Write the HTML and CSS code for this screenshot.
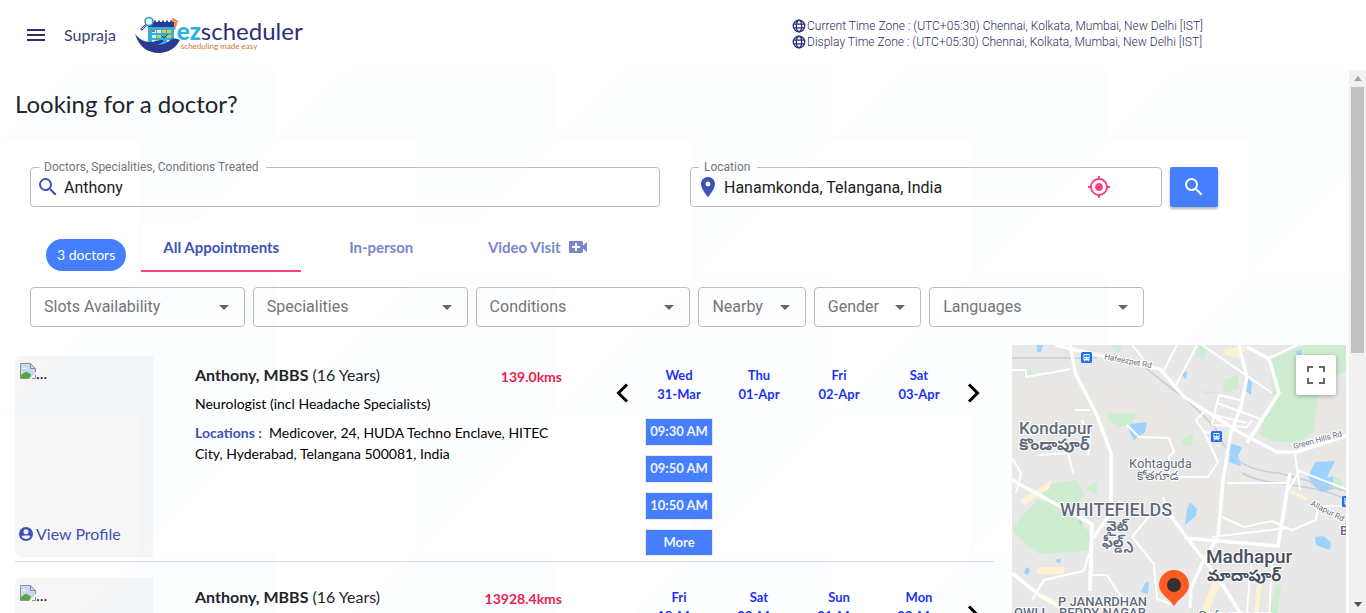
FILE: index.html
```html
<!DOCTYPE html>
<html lang="en">
<head>
<meta charset="utf-8">
<meta name="viewport" content="width=device-width, initial-scale=1">
<title>ezscheduler</title>
<link rel="stylesheet" href="styles.css">
</head>
<body>
<svg class="sprite" aria-hidden="true">
  <symbol id="i-search" viewBox="0 0 24 24"><path d="M15.5 14h-.79l-.28-.27A6.47 6.47 0 0 0 16 9.5 6.5 6.5 0 1 0 9.5 16c1.61 0 3.09-.59 4.23-1.57l.27.28v.79l5 4.99L20.49 19l-4.99-5zm-6 0C7.01 14 5 11.99 5 9.5S7.01 5 9.5 5 14 7.01 14 9.5 11.99 14 9.5 14z"/></symbol>
  <symbol id="i-globe" viewBox="0 0 16 16"><g fill="none" stroke="currentColor" stroke-width="1.5"><circle cx="8" cy="8" r="6.6"/><ellipse cx="8" cy="8" rx="3" ry="6.6"/><path d="M1.6 5.8h12.8M1.6 10.2h12.8"/></g></symbol>
  <symbol id="i-user" viewBox="0 0 16 16"><path fill-rule="evenodd" d="M8 1a7 7 0 1 0 0 14A7 7 0 0 0 8 1zm0 2.300a2.500 2.500 0 1 1 0 5 2.500 2.500 0 0 1 0-5zM3.600 10.200c1.300-.8 7.500-.8 8.800 0-.9 1.700-2.500 2.700-4.400 2.700s-3.500-1-4.400-2.700z"/></symbol>
  <symbol id="i-broken" viewBox="0 0 16 16"><path d="M.5.500h10l5 5v10H.5z" fill="#c5d8f7"/><path d="M1 15.500V12l5-3.500 5 3-1.500 4z" fill="#5aa637"/><path d="M2.500 6c0-2 2-2.500 2.500-1 1.500-.5 2.500 1 1 1z" fill="#fff"/><path d="M16 9.500 9 16h7z" fill="#f5f6f7"/><path d="M15.500 9V5.500l-5-5H.5v15H9M10.500.500v5h5M15.500 12v3.500H12" fill="none" stroke="#8e9296"/></symbol>
  <symbol id="i-train" viewBox="0 0 11 11"><rect width="11" height="11" rx="1.500" fill="#1a73e8"/><path fill="#fff" fill-rule="evenodd" d="M2.500 2h6v6h-1l1 1.500h-1L7 8.500H4L3.500 9.500h-1l1-1.500h-1zM3.300 3v2h2V3zM5.800 3v2h2V3zM3.500 6v1h1V6zm3 0v1h1V6z"/></symbol>
</svg>

<header class="topbar">
  <button class="menu" type="button" aria-label="Menu"><span></span><span></span><span></span></button>
  <a class="user" href="#">Supraja</a>
  <a class="logo" href="#" aria-label="ezscheduler">
    <svg class="logo-mark" viewBox="0 0 48 38" aria-hidden="true">
      <path d="M34 8l4-6 5 3-3 9-5-1z" fill="#f47b45"/><path d="M36 6l4 3M37 4l5 3M35 8l5 3" stroke="#fbc4a5" stroke-width=".8"/>
      <rect x="13" y="8" width="26" height="24" rx="2" fill="#2bb3e0"/>
      <path d="M13 6h26v5H13z" fill="#2b3990"/>
      <path d="M16 4.500v3M20 4.500v3M24 4.500v3M28 4.500v3M32 4.500v3M36 4.500v3" stroke="#2b3990" stroke-width="1.800"/>
      <path d="M17 14h4v3h-4zM22 14h4v3h-4zM17 19h4v3h-4zM22 24h4v3h-4zM17 24h4v2h-4zM32 24h4v2h-4z" fill="#d9f1fa"/>
      <path d="M27 14h4v3h-4zM22 19h4v3h-4zM32 14h4v3h-4zM32 19h4v3h-4z" fill="#fcc418"/><path d="M17 14h3v2h-3z" fill="#e9552d"/>
      <path d="M27 20l2 2 4-4" stroke="#2b3990" fill="none"/>
      <circle cx="14" cy="5.500" r="4" fill="#e8f7fd" stroke="#2f9fcc" stroke-width="1.600"/>
      <path d="M11 9l-5 5" stroke="#2b3990" stroke-width="2.400"/><path d="M10.500 9.500l-4 4" stroke="#fff" stroke-width=".8"/>
      <path d="M0 18c4 5 9 8 15 8 5 0 7-2 12-2 2 0 2 2-1 3l-4 2c7 0 11-3 15-6 3-1 6 0 8 1-4 8-12 13-21 13C13 37 4 31 0 18z" fill="#2b3990"/>
    </svg>
    <span class="logo-words"><span class="logo-name"><b>ez</b>scheduler</span><span class="logo-tag">scheduling made easy</span></span>
  </a>
  <div class="zones">
    <div class="zone"><svg><use href="#i-globe"/></svg>Current Time Zone : (UTC+05:30) Chennai, Kolkata, Mumbai, New Delhi [IST]</div>
    <div class="zone"><svg><use href="#i-globe"/></svg>Display Time Zone : (UTC+05:30) Chennai, Kolkata, Mumbai, New Delhi [IST]</div>
  </div>
</header>

<div class="viewport">
<main class="page">
  <h1>Looking for a doctor?</h1>
  <form class="search">
    <fieldset class="field field-query">
      <legend><label for="query">Doctors, Specialities, Conditions Treated</label></legend>
      <svg class="lead"><use href="#i-search"/></svg>
      <input id="query" type="text" value="Anthony">
    </fieldset>
    <fieldset class="field field-place">
      <legend><label for="place">Location</label></legend>
      <svg class="lead" viewBox="0 0 24 24"><path d="M12 2C8.130 2 5 5.130 5 9c0 5.250 7 13 7 13s7-7.750 7-13c0-3.870-3.130-7-7-7zm0 9.500a2.500 2.500 0 0 1 0-5 2.500 2.500 0 0 1 0 5z"/></svg>
      <input id="place" type="text" value="Hanamkonda, Telangana, India">
      <button class="locate" type="button" aria-label="Use my location"><svg viewBox="0 0 24 24"><path d="M12 8c-2.210 0-4 1.790-4 4s1.790 4 4 4 4-1.790 4-4-1.790-4-4-4zm8.940 3A8.994 8.994 0 0 0 13 3.060V1h-2v2.060A8.994 8.994 0 0 0 3.060 11H1v2h2.060A8.994 8.994 0 0 0 11 20.940V23h2v-2.060A8.994 8.994 0 0 0 20.940 13H23v-2h-2.060zM12 19c-3.870 0-7-3.130-7-7s3.130-7 7-7 7 3.130 7 7-3.130 7-7 7z"/></svg></button>
    </fieldset>
    <button class="go" type="submit" aria-label="Search"><svg><use href="#i-search"/></svg></button>
  </form>

  <div class="tabrow">
    <span class="count">3 doctors</span>
    <div class="tabs" role="tablist">
      <button type="button" role="tab" aria-selected="true" class="tab active">All Appointments</button>
      <button type="button" role="tab" aria-selected="false" class="tab">In-person</button>
      <button type="button" role="tab" aria-selected="false" class="tab video">Video Visit <svg viewBox="0 0 18 12"><path fill-rule="evenodd" d="M1 0h12a1 1 0 0 1 1 1v3.500L18 1v10l-4-3.500V11a1 1 0 0 1-1 1H1a1 1 0 0 1-1-1V1a1 1 0 0 1 1-1zm5 2v3H3v2h3v3h2V7h3V5H8V2z"/></svg></button>
    </div>
  </div>

  <div class="filters">
    <div class="pick"><select aria-label="Slots Availability"><option>Slots Availability</option></select></div>
    <div class="pick"><select aria-label="Specialities"><option>Specialities</option></select></div>
    <div class="pick"><select aria-label="Conditions"><option>Conditions</option></select></div>
    <div class="pick small"><select aria-label="Nearby"><option>Nearby</option></select></div>
    <div class="pick small"><select aria-label="Gender"><option>Gender</option></select></div>
    <div class="pick"><select aria-label="Languages"><option>Languages</option></select></div>
  </div>

  <div class="results">
    <div class="list">
      <article class="card">
        <div class="photo">
          <div class="missing"><svg><use href="#i-broken"/></svg>...</div>
          <a class="profile" href="#"><svg><use href="#i-user"/></svg>View Profile</a>
        </div>
        <div class="info">
          <div class="title"><h2><b>Anthony, MBBS</b> (16 Years)</h2><span class="km">139.0kms</span></div>
          <p class="spec">Neurologist (incl Headache Specialists)</p>
          <p class="loc"><b>Locations :</b>&nbsp; Medicover, 24, HUDA Techno Enclave, HITEC City, Hyderabad, Telangana 500081, India</p>
        </div>
        <div class="calendar">
          <button class="step" type="button" aria-label="Previous days"><svg viewBox="0 0 14 20"><path d="M12 1.500 3.500 10l8.500 8.500"/></svg></button>
          <div class="day"><div class="date">Wed<br>31-Mar</div>
            <button class="slot" type="button">09:30 AM</button><button class="slot" type="button">09:50 AM</button><button class="slot" type="button">10:50 AM</button><button class="slot" type="button">More</button></div>
          <div class="day"><div class="date">Thu<br>01-Apr</div></div>
          <div class="day"><div class="date">Fri<br>02-Apr</div></div>
          <div class="day"><div class="date">Sat<br>03-Apr</div></div>
          <button class="step" type="button" aria-label="Next days"><svg viewBox="0 0 14 20"><path d="M2 1.500 10.500 10 2 18.500"/></svg></button>
        </div>
      </article>
      <article class="card">
        <div class="photo">
          <div class="missing"><svg><use href="#i-broken"/></svg>...</div>
        </div>
        <div class="info">
          <div class="title"><h2><b>Anthony, MBBS</b> (16 Years)</h2><span class="km">13928.4kms</span></div>
        </div>
        <div class="calendar">
          <button class="step" type="button" aria-label="Previous days" disabled></button>
          <div class="day"><div class="date">Fri<br>19-Mar</div></div>
          <div class="day"><div class="date">Sat<br>20-Mar</div></div>
          <div class="day"><div class="date">Sun<br>21-Mar</div></div>
          <div class="day"><div class="date">Mon<br>22-Mar</div></div>
          <button class="step" type="button" aria-label="Next days"><svg viewBox="0 0 14 20"><path d="M2 1.500 10.500 10 2 18.500"/></svg></button>
        </div>
      </article>
    </div>

    <aside class="map" aria-label="Map">
      <svg class="mapart" viewBox="0 0 334 320" preserveAspectRatio="xMinYMin slice">
        <rect width="334" height="320" fill="#e8e8e8"/>
        <path d="M0 20 90 35 150 45 165 75 205 110 150 130 115 90 60 90 20 110 0 105zM160 128l95 12 25 45-85-5-75-25zM290 30l44 10v95l-60-30z" fill="#e9e7e3"/>
        <g fill="#ceecd0">
          <path d="M258 15 287 2l8-2h39v26c-12 6-24 12-27 24-3 10-2 24-6 36-6 9-16 12-28 11-12 0-20-3-26-8l14-36z"/>
          <path d="M97 68h28l-5 10-12 4-12-7zM171 93l11-5-3 14-10-2zM184 5c3-5 10-5 11 0l-3 10-8-3zM212 35l14-5 1 14-16 4zM191 46l14 1-13 3zM98 0h12l-3 8zM14 22l5 2 3 7-10-1z"/>
          <path d="M1 185c4-11 14-20 25-30l30 6 24 30-1 13c-8 3-18 4-24 3l-27 2C18 204 8 195 1 185zM30 140l35-5 8 15-12 13-28-3zM75 143l11-7-1 13-10-3zM255 278l8-38 6-1-4 41zM176 270l5-4v12zM318 0h16v25l-14-8zM320 130l10 5v12l-10-4z"/>
        </g>
        <g fill="#9cd3ff">
          <path d="M118 79l17-2-2 10-11 8-5-9zM234 30l6 8-1 12-5-4zM214 97l16 5-4 9 3 10-12-4 1-10zM303 117l20-1-7 14v8h-16l-4-6zM299 138l22-7v13l-12 3zM178 157l7 7-1 7-11 9 2-16zM303 192l8-1 8 6-1 8-14-5zM133 238l4-1-1 12-7-2zM283 6l7-1-2 8zM25 0h6l-2 7h-4zM170 28l5-2-1 8-4-3zM66 175l4 2-1 3zM14 222l4 2-2 6-4-2zM45 214h4l-1 4-4-1z"/>
        </g>
        <g fill="#fdf2d2"><path d="M211 5 235 0l-6 13-16-3zM8 155 40 135l-3 9L12 160zM26 222h26v7H24zM200 238l9 0-14 33-6-3zM245 239h5l-5 40h-4zM28 248l22 10-2 6-22-12zM280 145l16 8-2 3-17-9z"/></g>
        <g fill="none" stroke="#c8ccd3" stroke-width="1.500"><path d="M0 13h85M130 20c24 20 50 36 74 64 10 26 26 42 63 44l67 18M230 128c24 14 64 8 104 26"/></g>
        <g fill="none" stroke="#fff">
          <path stroke-width="3.500" d="M43 0 60 4l88 20 24 28 55 35 38 20h20l49-16M58 0l6 30 20 38 15 40v60l-20 28-1 50M227 0l8 32-6 30-10 25-8 48-5 56-17 30-10 22-1 20M158 170l24 32 25 32 25 40M0 135l80 44-1 50M172 193l94 8 12-73M0 228l30 24 65 35M235 98l32-50-10-34-22-12"/>
          <path stroke-width="2" d="M0 25h14v7l45-8M185 0l-22 42M255 14 285 0M165 0l-14 27M120 0l12 15-10 7M207 50l25 6M202 70l33 8M205 58l44 16M200 80l35 2 5-7M207 50l-7 29M210 88l-18-1-8-12 8-8M192 87l14 30-10 15h-39v-20l5-5-5-14-30-1-12-12M190 0l70 48M200 192l75-9M215 138h60M210 172l22 10 28-6 22 10M155 166l-4-14M138 170l-18 22M120 192l22 27 3 35 14 5M80 230h15l10 16 20 24M20 255l12-20 40-9 5-18M275 148l12-22 47 18M280 185l24-10 2-14 28 0M283 110l5 35M170 280l85-8 23 15M0 113l9 15-5 20M26 110l30-2 5 20M63 65h15M70 75l8 21-2 14M240 210l-6 67M260 212l-3 65"/>
        </g>
        <use href="#i-train" x="69" y="7" width="11" height="11"/><use href="#i-train" x="199" y="86" width="11" height="11"/><use href="#i-train" x="330" y="151" width="11" height="11"/>
        <g class="lbl">
          <text x="7" y="89" class="t-town">Kondapur</text><text x="7" y="105" class="t-te16">కొండాపూర్</text>
          <text x="117" y="123" class="t-small">Kohtaguda</text><text x="125" y="135" class="t-te">కోతగూడ</text>
          <text x="48" y="171" class="t-caps">WHITEFIELDS</text><text x="94" y="186" class="t-te14">వైట్</text><text x="90" y="202" class="t-te14">ఫీల్డ్స్</text>
          <text x="194" y="218" class="t-city">Madhapur</text><text x="195" y="236" class="t-te16 dark">మాదాపూర్</text>
          <text x="46" y="261" class="t-mid">P JANARDHAN</text><text x="47" y="272" class="t-mid">REDDY NAGAR</text><text x="2" y="272" class="t-mid">OWLI</text>
          <text x="186" y="275" class="t-small">Gafoornagar</text><text x="328" y="190" class="t-mid">B</text>
          <text class="t-road" transform="translate(92 14) rotate(11)">Hafeezpet Rd</text>
          <text class="t-road" transform="translate(282 104) rotate(-15)">Green Hills Rd</text>
          <text class="t-road" transform="translate(298 160) rotate(27)">Allapur Rd</text>
        </g>
        <path d="M162 261c-5-8-15-12-15-21a15 15 0 0 1 30 0c0 9-10 13-15 21z" fill="#ff5a24"/><circle cx="162" cy="240" r="7" fill="#333"/>
      </svg>
      <button class="full" type="button" aria-label="Toggle fullscreen view"><svg viewBox="0 0 18 18"><path d="M0 0v6h2V2h4V0H0zm16 0h-4v2h4v4h2V0h-2zm0 16h-4v2h6v-6h-2v4zM2 12H0v6h6v-2H2v-4z"/></svg></button>
    </aside>
  </div>
</main>
<div class="scrollbar" aria-hidden="true"><i class="up"></i><i class="thumb"></i><i class="down"></i></div>
</div>
</body>
</html>
```
FILE: styles.css
```css
* { box-sizing: border-box; }

body {
  margin: 0;
  height: 100vh;
  overflow: hidden;
  display: flex;
  flex-direction: column;
  font-family: Lato, "Open Sans", sans-serif;
  font-size: 14px;
  color: #212529;
  background: #fff;
}

button, input, select { font: inherit; }
button { border: 0; padding: 0; background: none; cursor: pointer; }
a { text-decoration: none; }
h1, h2, p { margin: 0; font-weight: 400; }
svg { flex: none; fill: currentColor; }
.sprite { display: none; }

/* Top bar */
.topbar {
  flex: none;
  display: flex;
  align-items: center;
  height: 70px;
  padding-left: 27px;
  color: #2b2f77;
}
.menu { display: grid; gap: 3px; width: 18px; }
.menu span { height: 2px; background: #2b2f77; }
.user { margin-left: 19px; padding-bottom: 2px; font-size: 16px; color: #3b3f72; }
.logo { display: flex; align-items: center; margin-left: 19px; color: #2b2f77; }
.logo-mark { width: 48px; height: 38px; }
.logo-words { display: flex; flex-direction: column; margin-left: -6px; }
.logo-name { font-size: 24px; line-height: 22px; font-weight: 400; }
.logo-name b { font-weight: 900; color: #2bb3e0; }
.logo-tag { margin-left: 4px; font-size: 8px; line-height: 8px; color: #c8793a; }
.zones { margin-left: auto; margin-right: 163px; padding-bottom: 2px; }
.zone { display: flex; align-items: center; gap: 1px; font-family: Roboto, sans-serif; font-size: 12px; line-height: 16px; font-weight: 300; color: #2b2f60; }
.zone svg { width: 14px; height: 14px; color: #2b2f77; }

/* Scrolling region */
.viewport {
  flex: 1;
  min-height: 0;
  display: flex;
  overflow: hidden;
}
.page {
  flex: 1;
  min-width: 0;
  padding: 19px 3px 0 15px;
  background: url("data:image/svg+xml,%3Csvg xmlns='http://www.w3.org/2000/svg' width='277' height='276'%3E%3Cpath d='M139 0h138v138L139 276V138H0z' fill='%23fcfdff'/%3E%3C/svg%3E") 0 -68px;
}
h1 { font-size: 24px; line-height: 30px; }

.scrollbar {
  flex: none;
  display: flex;
  flex-direction: column;
  align-items: center;
  width: 17px;
  background: #f1f1f1;
}
.scrollbar i { display: block; }
.up, .down { margin: 6px 0; border: 4px solid transparent; border-top-width: 0; border-bottom: 5px solid #505050; }
.up { border-bottom-color: #a3a3a3; }
.thumb { width: 13px; height: 266px; background: #c1c1c1; }
.down { margin-top: auto; border-bottom-width: 0; border-bottom-color: transparent; border-top: 5px solid #505050; }

/* Search */
.search { display: flex; align-items: flex-end; margin: 41px 128px 0 15px; }
.field {
  display: flex;
  align-items: center;
  column-gap: 4px;
  min-width: 0;
  margin: 0;
  height: 47px;
  padding: 0 8px 6px;
  border: 1px solid #bdbdbd;
  border-radius: 4px;
  font-family: Roboto, sans-serif;
}
.field-query { flex: 612; margin-right: 30px; }
.field-place { flex: 454; margin-right: 8px; }
.field legend { padding: 0 7px 0 5px; font-size: 12px; line-height: 14px; color: #757575; }
.field .lead { width: 24px; height: 24px; margin-left: -3px; color: #3f51b5; }
.field input { flex: 1; min-width: 0; height: 26px; border: 0; padding: 0; background: none; outline: 0; font-size: 16px; color: #212121; }
.locate { height: 24px; margin-right: 42px; color: #ff4081; }
.locate svg { width: 24px; height: 24px; }
.go {
  display: grid;
  place-items: center;
  width: 48px;
  height: 40px;
  border-radius: 2px;
  background: #457eff;
  color: #fff;
  box-shadow: 0 2px 3px rgba(0, 0, 0, .3);
}
.go svg { width: 24px; height: 24px; }

/* Tabs */
.tabrow { display: flex; align-items: flex-end; margin: 15px 15px 0 31px; gap: 15px; }
.count { margin-bottom: 1px; padding: 0 11px; border-radius: 16px; line-height: 32px; background: #457eff; color: #fff; }
.tabs { display: flex; background: #fff; }
.tab {
  display: flex;
  align-items: center;
  justify-content: center;
  gap: 8px;
  min-width: 160px;
  height: 50px;
  padding-top: 2px;
  border-bottom: 2px solid transparent;
  font-size: 15px;
  font-weight: 700;
  color: #7986cb;
}
.tab.active { color: #3f51b5; border-bottom-color: #ff4081; }
.tab.video { min-width: 152px; }
.tab svg { width: 18px; height: 12px; }

/* Filters */
.filters { display: flex; gap: 8px; margin: 15px 202px 0 15px; }
.pick { flex: 2 1 0; position: relative; min-width: 0; }
.pick.small { flex: 1 1 0; }
.pick select {
  display: block;
  width: 100%;
  height: 40px;
  padding: 0 13px 2px;
  border: 1px solid #bdbdbd;
  border-radius: 4px;
  appearance: none;
  background: none;
  font-family: Roboto, sans-serif;
  font-size: 16px;
  color: #757575;
}
.pick::after {
  content: "";
  position: absolute;
  right: 16px;
  top: 18px;
  border: 5px solid transparent;
  border-top-color: #666;
  border-bottom: 0;
}

/* Results */
.results { display: flex; align-items: flex-start; gap: 18px; margin-top: 18px; }
.list { flex: 1; min-width: 0; }
.card { display: flex; padding: 11px 0 4px; border-bottom: 1px solid #dadcdf; }
.card + .card { padding-top: 16px; }
.photo {
  flex: none;
  display: flex;
  flex-direction: column;
  justify-content: space-between;
  width: 138px;
  height: 201px;
  padding: 6px 3px 13px;
  border-radius: 6px 0 0 6px;
  background: rgba(0, 0, 0, .035);
}
.missing { display: flex; align-items: flex-end; height: 20px; padding-left: 2px; font-size: 16px; line-height: 18px; }
.missing svg { width: 16px; height: 16px; margin-bottom: 3px; }
.profile { display: flex; align-items: center; gap: 2px; font-size: 16px; line-height: 20px; color: #3f51b5; }
.profile svg { width: 16px; height: 16px; }
.info { flex: 1; min-width: 0; padding: 7px 0 0 42px; }
.title { display: flex; justify-content: space-between; align-items: flex-end; }
h2 { font-size: 16px; line-height: 24px; }
.km { font-weight: 700; line-height: 20px; color: #e91e50; }
.spec { margin-top: 6px; line-height: 21px; color: #000; }
.loc { margin-top: 8px; line-height: 21px; color: #000; }
.loc b { color: #3f51b5; }

.calendar { flex: none; display: flex; align-items: flex-start; width: 432px; padding-left: 53px; }
.step { width: 24px; height: 20px; margin-top: 27px; text-align: left; color: #000; }
.step svg { width: 14px; height: 20px; fill: none; stroke: #000; stroke-width: 3; }
.step:last-child { padding-left: 8px; }
.day { display: flex; flex-direction: column; align-items: center; width: 80px; }
.date { margin: 10px 0 14px; font-size: 13px; line-height: 19px; text-align: center; font-weight: 700; color: #1a33f5; }
.slot {
  width: 68px;
  height: 28px;
  margin-bottom: 9px;
  border: 1px solid #e8e8ee;
  padding: 0 0 2px;
  background: #457eff;
  font-size: 13px;
  font-weight: 700;
  color: #f1f3f8;
}
.slot:last-child { height: 27px; margin-bottom: 0; }

/* Map */
.map { flex: none; position: relative; width: 334px; height: 320px; overflow: hidden; }
.mapart { display: block; width: 100%; height: 100%; }
.full {
  position: absolute;
  right: 10px;
  top: 10px;
  display: grid;
  place-items: center;
  width: 40px;
  height: 40px;
  border-radius: 2px;
  background: #fff;
  color: #666;
  box-shadow: 0 1px 4px rgba(0, 0, 0, .3);
}
.full svg { width: 18px; height: 18px; }
.lbl text { font-family: Roboto, "Noto Sans Telugu", sans-serif; fill: #5f6b7c; stroke: #fff; stroke-width: 2px; paint-order: stroke; }
.lbl .t-town { font-size: 17px; font-weight: 500; }
.lbl .t-city { font-size: 19px; font-weight: 500; fill: #46505e; }
.lbl .t-caps { font-size: 18px; font-weight: 500; }
.lbl .t-mid { font-size: 13px; font-weight: 500; }
.lbl .t-small { font-size: 13px; }
.lbl .t-road { font-size: 8px; }
.lbl .t-te { font-size: 12px; }
.lbl .t-te14 { font-size: 14px; font-weight: 700; }
.lbl .t-te16 { font-size: 16px; font-weight: 700; }
.lbl .dark { fill: #46505e; }
```
